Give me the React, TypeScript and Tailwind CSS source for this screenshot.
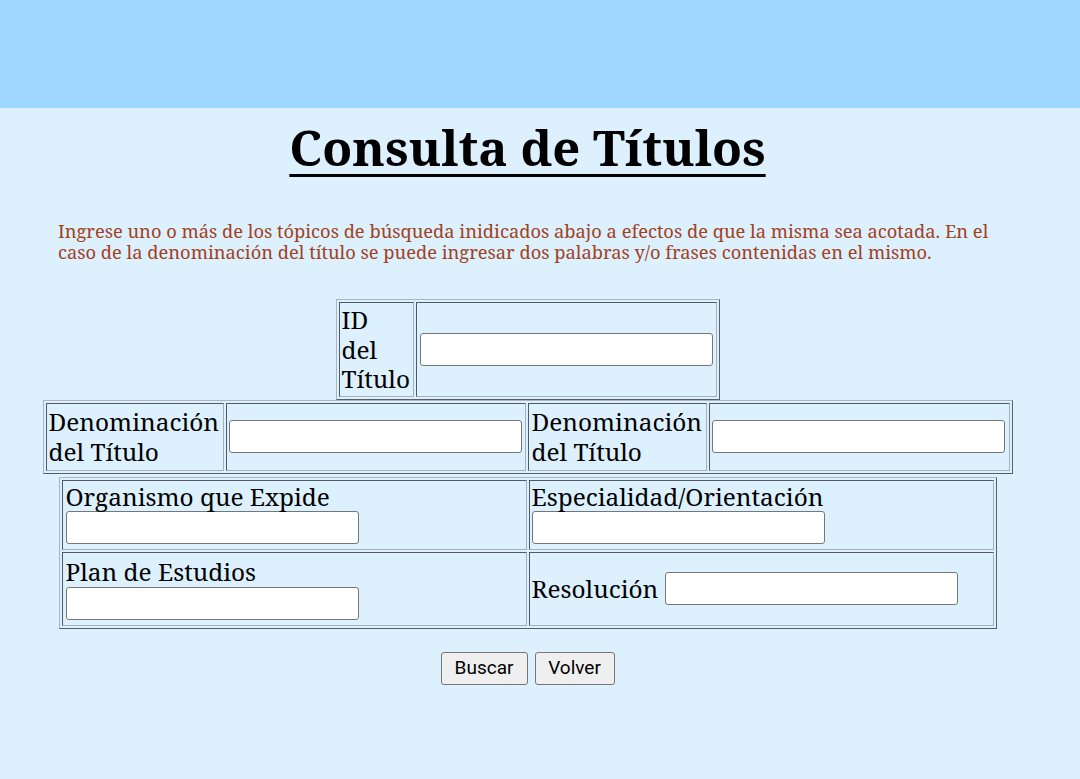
import React from 'react';

const serif = { fontFamily: '"Noto Serif", "DejaVu Serif", serif' };

const tableCls =
  'border-separate border-spacing-[2px] border border-t-[#aab4be] border-l-[#aab4be] border-b-[#56606a] border-r-[#56606a]';
const cellCls =
  'border border-t-[#505a64] border-l-[#505a64] border-b-[#a6b0ba] border-r-[#a6b0ba] p-[1px] align-middle';
const inputCls =
  'block bg-white border border-[#767676] rounded-[3px] w-[293px] h-[33px] outline-none';

const Field: React.FC = () => <input type="text" className={inputCls} />;

export default function App() {
  return (
    <div className="min-h-screen bg-[#dcf0fe] text-black" style={serif}>
      {/* Header band */}
      <div className="h-[108px] bg-[#9ed7ff]" />

      <div className="w-[1055px] flex flex-col items-center">
        <h1 className="mt-[7px] text-[49px] leading-[64px] font-bold underline decoration-[3px] underline-offset-[8px]">
          Consulta de Títulos
        </h1>

        <p className="self-start ml-[58px] mt-[41px] w-[950px] text-[18.3px] leading-[21px] text-[#a3401c]">
          Ingrese uno o más de los tópicos de búsqueda inidicados abajo a efectos de que la misma sea acotada. En el
          caso de la denominación del título se puede ingresar dos palabras y/o frases contenidas en el mismo.
        </p>

        <div className="mt-[37px] flex flex-col items-center text-[24.4px] leading-[29.5px]">
          {/* ID */}
          <table className={tableCls}>
            <tbody>
              <tr>
                <td className={cellCls + ' w-[75px] py-[2px] pl-[2px]'}>
                  ID<br />del<br />Título
                </td>
                <td className={cellCls + ' w-[301px] px-[3px]'}>
                  <Field />
                </td>
              </tr>
            </tbody>
          </table>

          {/* Denominación x2 */}
          <table className={tableCls + ' w-[970px]'}>
            <tbody>
              <tr className="h-[68px]">
                <td className={cellCls + ' w-[177px] pl-[2px]'}>
                  Denominación<br />del Título
                </td>
                <td className={cellCls + ' w-[299px] px-[2px]'}>
                  <Field />
                </td>
                <td className={cellCls + ' w-[177px] pl-[2px]'}>
                  Denominación<br />del Título
                </td>
                <td className={cellCls + ' w-[298px] px-[2px]'}>
                  <Field />
                </td>
              </tr>
            </tbody>
          </table>

          {/* Organismo / Especialidad / Plan / Resolución */}
          <table className={tableCls + ' w-[938px] mt-[3px]'}>
            <tbody>
              <tr className="h-[70px]">
                <td className={cellCls + ' w-[464px] px-[3px] align-top'}>
                  <div>Organismo que Expide</div>
                  <Field />
                </td>
                <td className={cellCls + ' w-[464px] px-[2px] align-top'}>
                  <div>Especialidad/Orientación</div>
                  <Field />
                </td>
              </tr>
              <tr className="h-[74px]">
                <td className={cellCls + ' px-[3px]'}>
                  <div>Plan de Estudios</div>
                  <Field />
                </td>
                <td className={cellCls + ' px-[2px]'}>
                  <div className="flex items-center gap-[7px]">
                    <span>Resolución</span>
                    <input type="text" className={inputCls} />
                  </div>
                </td>
              </tr>
            </tbody>
          </table>
        </div>

        <div className="mt-[23px] flex gap-[7px]" style={{ fontFamily: 'Roboto, "Liberation Sans", sans-serif' }}>
          <button className="h-[33px] w-[87px] bg-[#efefef] border border-[#767676] rounded-[3px] text-[19px] text-black">
            Buscar
          </button>
          <button className="h-[33px] w-[80px] bg-[#efefef] border border-[#767676] rounded-[3px] text-[19px] text-black">
            Volver
          </button>
        </div>
      </div>
    </div>
  );
}
